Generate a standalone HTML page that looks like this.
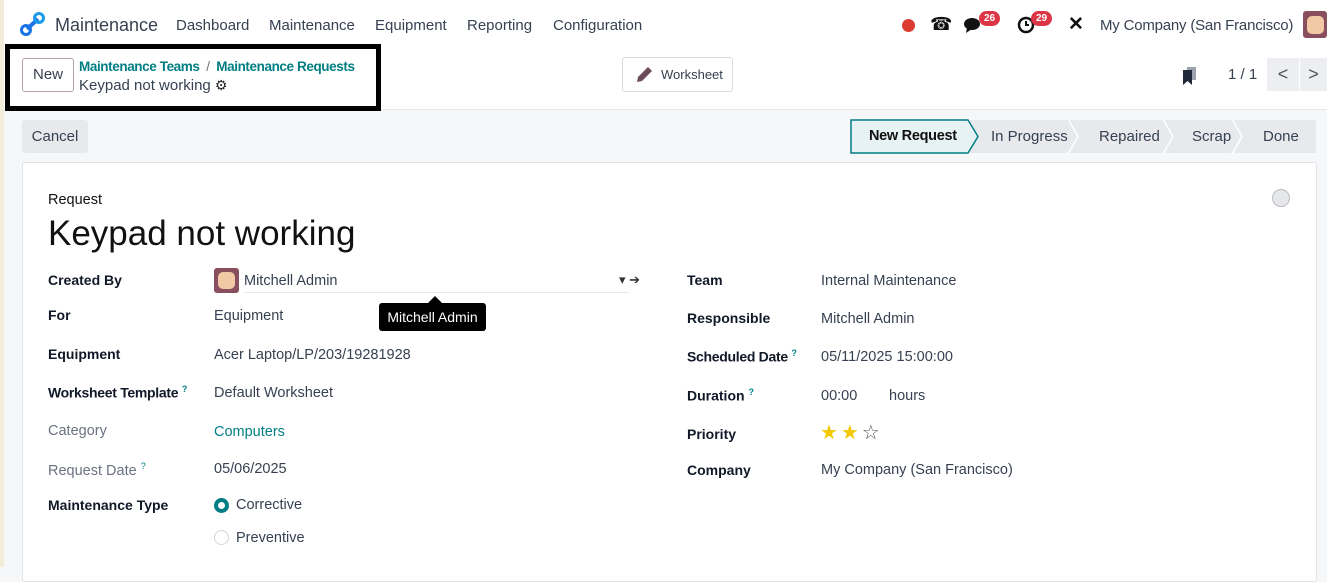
<!DOCTYPE html>
<html><head><meta charset="utf-8"><style>
*{box-sizing:border-box;margin:0;padding:0}
body{width:1327px;height:567px;overflow:hidden;background:#f6f7f9;font-family:"Liberation Sans",sans-serif;color:#374151;position:relative;font-size:14.5px}
.a{position:absolute;white-space:nowrap}
.top{position:absolute;left:0;top:0;width:1327px;height:110px;background:#fff;border-bottom:1px solid #e5e7eb}
.lbl{font-weight:bold;color:#111827;font-size:14px}
.val{color:#374151}
.teal{color:#017e84}
.badge{position:absolute;background:#dc3545;color:#fff;font-size:10px;font-weight:bold;border-radius:9px;padding:2px 5px}
.stage{position:absolute;top:120px;height:33px;background:#e7e9ed;color:#374151;font-size:15px;line-height:33px}
</style></head><body>
<div class="top"></div>
<div class="a" style="left:0;top:0;width:4px;height:567px;background:#f3ecd9"></div>
<!-- nav -->
<svg class="a" style="left:20px;top:12px" width="26" height="24" viewBox="0 0 26 24"><line x1="7" y1="17" x2="18" y2="7" stroke="#1a73e8" stroke-width="4"/><circle cx="6" cy="18" r="4.5" fill="none" stroke="#1a73e8" stroke-width="3"/><circle cx="19" cy="6" r="4.5" fill="none" stroke="#1a9be8" stroke-width="3"/></svg>
<div class="a" style="left:55px;top:15px;font-size:18px;color:#374151">Maintenance</div>
<div class="a" style="left:176px;top:17px;font-size:15px">Dashboard</div>
<div class="a" style="left:269px;top:17px;font-size:15px">Maintenance</div>
<div class="a" style="left:375px;top:17px;font-size:15px">Equipment</div>
<div class="a" style="left:467px;top:17px;font-size:15px">Reporting</div>
<div class="a" style="left:553px;top:17px;font-size:15px">Configuration</div>
<div class="a" style="left:902px;top:19px;width:13px;height:13px;border-radius:50%;background:#dc3b32"></div>
<div class="a" style="left:930px;top:14px;font-size:18px;color:#111">☎</div>
<svg class="a" style="left:964px;top:16px" width="22" height="18" viewBox="0 0 22 18"><ellipse cx="8" cy="8" rx="8" ry="6" fill="#111"/><path d="M3 12 L2 17 L8 13Z" fill="#111"/></svg>
<div class="badge" style="left:979px;top:11px">26</div>
<svg class="a" style="left:1017px;top:16px" width="18" height="18" viewBox="0 0 18 18"><circle cx="9" cy="9" r="7" fill="none" stroke="#111" stroke-width="2.5"/><path d="M9 5v4h3" stroke="#111" stroke-width="2" fill="none"/></svg>
<div class="badge" style="left:1031px;top:11px">29</div>
<div class="a" style="left:1068px;top:13px;font-size:19px;color:#111;font-weight:bold">✕</div>
<div class="a" style="left:1100px;top:17px;font-size:15px;letter-spacing:-0.2px">My Company (San Francisco)</div>
<div class="a" style="left:1303px;top:11px;width:24px;height:27px;background:#8a4f5e;border-radius:3px"></div>
<div class="a" style="left:1307px;top:16px;width:17px;height:18px;background:#f1c9a5;border-radius:5px"></div>
<!-- control panel -->
<div class="a" style="left:5px;top:44px;width:376px;height:67px;border:5px solid #000"></div>
<div class="a" style="left:22px;top:58px;width:52px;height:34px;border:1px solid #b8a0ab;border-radius:3px;font-size:15px;text-align:center;line-height:32px;color:#374151">New</div>
<div class="a teal" style="left:79px;top:59px;font-size:13.5px;font-weight:bold;letter-spacing:-0.4px">Maintenance Teams <span style="color:#6b7280;font-weight:normal">&nbsp;/&nbsp;</span> Maintenance Requests</div>
<div class="a" style="left:79px;top:77px;font-size:15px">Keypad not working <span style="font-size:14px;color:#222">⚙</span></div>
<div class="a" style="left:622px;top:57px;width:111px;height:35px;border:1px solid #d8dadd;border-radius:3px;background:#fff;font-size:13px;line-height:33px;padding-left:38px">Worksheet</div>
<svg class="a" style="left:634px;top:66px" width="20" height="18" viewBox="0 0 20 18"><path d="M3 16 L4 11 L14 1 L18 5 L8 15Z" fill="#6b4a5a"/></svg>
<svg class="a" style="left:1182px;top:66px" width="16" height="20" viewBox="0 0 16 20"><rect x="5" y="1" width="9" height="13" fill="#9ca3af"/><path d="M1 4h9v15l-4.5-4L1 19Z" fill="#1f2937"/></svg>
<div class="a" style="left:1228px;top:66px;font-size:15px">1 / 1</div>
<div class="a" style="left:1267px;top:58px;width:32px;height:33px;background:#eceef1;text-align:center;line-height:33px;font-size:18px;color:#555">&lt;</div>
<div class="a" style="left:1300px;top:58px;width:27px;height:33px;background:#eceef1;text-align:center;line-height:33px;font-size:18px;color:#555">&gt;</div>
<!-- status bar -->
<div class="a" style="left:22px;top:120px;width:66px;height:33px;background:#e7e9ed;border-radius:3px;font-size:15px;line-height:33px;text-align:center;color:#374151">Cancel</div>
<div class="stage" style="left:960px;width:356px"></div>
<svg class="a" style="left:850px;top:119px" width="470" height="35" viewBox="0 0 470 35"><path d="M1 1 H118 L128 17.5 L118 34 H1Z" fill="#e6f2f3" stroke="#017e84" stroke-width="1.5"/><path d="M218 0 L228 17.5 L218 35" fill="none" stroke="#fff" stroke-width="1.5"/><path d="M313 0 L323 17.5 L313 35" fill="none" stroke="#fff" stroke-width="1.5"/><path d="M382 0 L392 17.5 L382 35" fill="none" stroke="#fff" stroke-width="1.5"/></svg>
<div class="a" style="left:869px;top:128px;font-size:14.5px;font-weight:bold;color:#111;letter-spacing:-0.3px">New Request</div>
<div class="a" style="left:991px;top:128px;font-size:15px">In Progress</div>
<div class="a" style="left:1099px;top:128px;font-size:15px">Repaired</div>
<div class="a" style="left:1192px;top:128px;font-size:15px">Scrap</div>
<div class="a" style="left:1263px;top:128px;font-size:15px">Done</div>
<!-- sheet -->
<div class="a" style="left:22px;top:162px;width:1295px;height:420px;background:#fff;border:1px solid #e1e3e6;border-radius:3px"></div>
<div class="a" style="left:1272px;top:189px;width:18px;height:18px;border-radius:50%;background:#e5e7eb;border:1px solid #bbb"></div>
<div class="a" style="left:48px;top:192px;font-size:14.5px;color:#111">Request</div>
<div class="a" style="left:48px;top:214px;font-size:35px;color:#111">Keypad not working</div>
<div class="a lbl" style="left:48px;top:272px">Created By</div>
<div class="a" style="left:214px;top:268px;width:25px;height:25px;background:#8a4f5e;border-radius:3px"></div>
<div class="a" style="left:218px;top:272px;width:17px;height:17px;background:#f1c9a5;border-radius:5px"></div>
<div class="a val" style="left:244px;top:273px">Mitchell Admin</div>
<div class="a" style="left:244px;top:292px;width:385px;height:1px;background:#e5e7eb"></div>
<div class="a" style="left:619px;top:272px;font-size:13px;color:#333">▾ ➔</div>
<div class="a" style="left:379px;top:303px;width:107px;height:28px;background:#000;border-radius:3px;color:#fff;font-size:14px;line-height:28px;text-align:center">Mitchell Admin</div>
<div class="a" style="left:428px;top:296px;border:7px solid transparent;border-bottom-color:#000;border-top:0"></div>
<div class="a lbl" style="left:48px;top:307px">For</div>
<div class="a val" style="left:214px;top:308px">Equipment</div>
<div class="a lbl" style="left:48px;top:346px">Equipment</div>
<div class="a val" style="left:214px;top:347px">Acer Laptop/LP/203/19281928</div>
<div class="a lbl" style="left:48px;top:384px;letter-spacing:-0.3px">Worksheet Template <sup class="teal" style="font-size:9px">?</sup></div>
<div class="a val" style="left:214px;top:385px">Default Worksheet</div>
<div class="a" style="left:48px;top:423px;color:#6b7280">Category</div>
<div class="a teal" style="left:214px;top:424px">Computers</div>
<div class="a" style="left:48px;top:461px;color:#6b7280">Request Date <sup class="teal" style="font-size:9px">?</sup></div>
<div class="a val" style="left:214px;top:461px">05/06/2025</div>
<div class="a lbl" style="left:48px;top:497px">Maintenance Type</div>
<div class="a" style="left:214px;top:498px;width:15px;height:15px;border-radius:50%;border:4px solid #017e84"></div>
<div class="a val" style="left:236px;top:497px">Corrective</div>
<div class="a" style="left:214px;top:530px;width:15px;height:15px;border-radius:50%;border:1px solid #d1d5db"></div>
<div class="a val" style="left:236px;top:530px">Preventive</div>
<div class="a lbl" style="left:687px;top:272px">Team</div>
<div class="a val" style="left:821px;top:273px">Internal Maintenance</div>
<div class="a lbl" style="left:687px;top:310px">Responsible</div>
<div class="a val" style="left:821px;top:311px">Mitchell Admin</div>
<div class="a lbl" style="left:687px;top:348px;letter-spacing:-0.3px">Scheduled Date <sup class="teal" style="font-size:9px">?</sup></div>
<div class="a val" style="left:821px;top:349px">05/11/2025 15:00:00</div>
<div class="a lbl" style="left:687px;top:387px">Duration <sup class="teal" style="font-size:9px">?</sup></div>
<div class="a val" style="left:821px;top:388px">00:00</div>
<div class="a val" style="left:889px;top:388px">hours</div>
<div class="a lbl" style="left:687px;top:426px">Priority</div>
<div class="a" style="left:820px;top:420px;font-size:20px;color:#f3c800;letter-spacing:3px">★★<span style="color:#555">☆</span></div>
<div class="a lbl" style="left:687px;top:462px">Company</div>
<div class="a val" style="left:821px;top:462px">My Company (San Francisco)</div>
</body></html>
